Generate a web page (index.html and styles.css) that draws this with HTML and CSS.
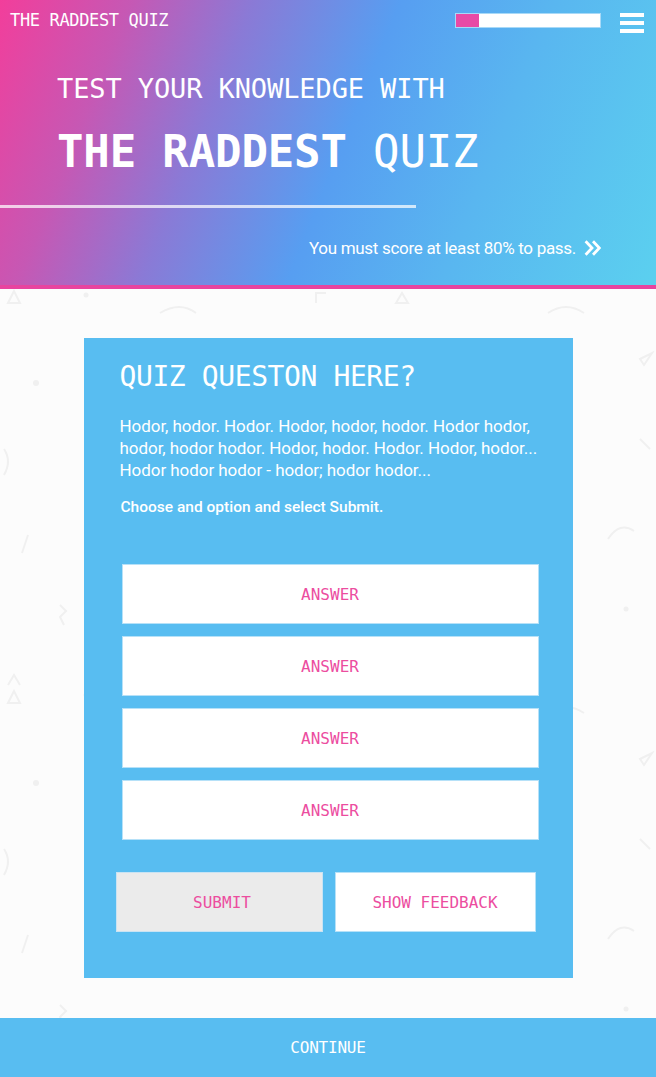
FILE: index.html
```html
<!DOCTYPE html>
<html lang="en">
<head>
<meta charset="utf-8">
<title>The Raddest Quiz</title>
<link rel="stylesheet" href="styles.css">
</head>
<body>
<header class="hero">
  <div class="topbar">
    <div class="brand">THE RADDEST QUIZ</div>
    <div class="top-right">
      <div class="progress"><div class="progress-fill" style="width:16%"></div></div>
      <div class="menu" aria-label="Menu"><span></span><span></span><span></span></div>
    </div>
  </div>
  <div class="hero-titles">
    <p class="kicker">TEST YOUR KNOWLEDGE WITH</p>
    <h1 class="title"><b>THE RADDEST</b> QUIZ</h1>
  </div>
  <div class="rule"></div>
  <p class="pass">You must score at least 80% to pass.
    <svg class="chev" width="17" height="16" viewBox="0 0 17 16"><path d="M1.6 1.2 L8 8 L1.6 14.8 M9 1.2 L15.4 8 L9 14.8" fill="none" stroke="#fff" stroke-width="2.8"/></svg>
  </p>
</header>
<main class="stage">
  <section class="card">
    <h2 class="question">QUIZ QUESTON HERE?</h2>
    <p class="body">Hodor, hodor. Hodor. Hodor, hodor, hodor. Hodor hodor, hodor, hodor hodor. Hodor, hodor. Hodor. Hodor, hodor... Hodor hodor hodor - hodor; hodor hodor...</p>
    <p class="instruct">Choose and option and select Submit.</p>
    <div class="answers">
      <button class="answer">ANSWER</button>
      <button class="answer">ANSWER</button>
      <button class="answer">ANSWER</button>
      <button class="answer">ANSWER</button>
    </div>
    <div class="actions">
      <button class="btn submit">SUBMIT</button>
      <button class="btn feedback">SHOW FEEDBACK</button>
    </div>
  </section>
</main>
<footer class="continue">CONTINUE</footer>
</body>
</html>
```
FILE: styles.css
```css
* { box-sizing: border-box; }
html, body { margin: 0; padding: 0; }
body {
  width: 656px;
  background: #fcfcfc;
  font-family: Roboto, "Liberation Sans", sans-serif;
  color: #fff;
}
.hero {
  height: 289px;
  padding: 10px 12px 0 0;
  background: linear-gradient(112deg, #f23e9b 0%, #c658b4 17%, #8a7ad6 33%, #579ef1 52%, #59b6f0 72%, #5bd0ef 100%);
  border-bottom: 4px solid #e8449f;
}
.topbar {
  display: flex;
  justify-content: space-between;
  align-items: flex-start;
  padding-left: 10px;
}
.brand {
  font-family: "DejaVu Sans Mono", "Liberation Mono", monospace;
  font-size: 17px;
  line-height: 20px;
  letter-spacing: -0.35px;
}
.top-right { display: flex; align-items: flex-start; gap: 19px; padding-top: 3px; }
.progress {
  width: 146px;
  height: 15px;
  background: #fff;
  border: 1px solid #a8d9f7;
}
.progress-fill { height: 100%; background: #e84aa6; }
.menu { display: flex; flex-direction: column; gap: 4px; width: 24px; }
.menu span { display: block; height: 4px; background: #fff; }
.hero-titles { padding-left: 57px; margin-top: 40px; }
.kicker {
  margin: 0;
  font-family: "DejaVu Sans Mono", "Liberation Mono", monospace;
  font-size: 27px;
  line-height: 32px;
  letter-spacing: -0.1px;
}
.title {
  margin: 21px 0 0;
  font-family: "DejaVu Sans Mono", "Liberation Mono", monospace;
  font-size: 44px;
  line-height: 52px;
  font-weight: normal;
  letter-spacing: -0.15px;
}
.title b { font-weight: bold; }
.rule {
  width: 416px;
  height: 3px;
  margin-top: 27px;
  background: rgba(255,255,255,0.72);
}
.pass {
  margin: 29px 43px 0 0;
  display: flex;
  justify-content: flex-end;
  align-items: center;
  gap: 8px;
  font-size: 17px;
  line-height: 22px;
  letter-spacing: -0.3px;
}
.chev { display: block; }
.stage {
  padding: 49px 0 40px;
  background-color: #fcfcfc;
  background-image: url("data:image/svg+xml;utf8,<svg xmlns='http://www.w3.org/2000/svg' width='656' height='400' viewBox='0 0 656 400'><g fill='none' stroke='%23f0f0f0' stroke-width='2'><path d='M8 14 L14 2 L20 14 Z'/><path d='M4 160 Q12 172 4 186'/><path d='M28 246 L22 264'/><path d='M60 316 L66 322 L60 328 L64 336'/><path d='M8 396 L14 386 L20 396'/><path d='M316 14 L316 4 L326 4'/><path d='M396 14 L402 4 L408 14 Z'/><path d='M548 24 Q566 12 584 24'/><path d='M640 70 L652 64 L644 76 Z'/><path d='M608 250 Q620 232 634 242'/><path d='M640 150 L650 160'/><path d='M160 24 Q180 12 196 24'/></g><g fill='%23f0f0f0'><circle cx='36' cy='94' r='3'/><circle cx='86' cy='6' r='2.5'/><circle cx='546' cy='96' r='2.5'/><circle cx='626' cy='320' r='2.5'/></g></svg>");
  background-repeat: repeat-y;
}
.card {
  width: 489px;
  margin: 0 auto;
  background: #58bdf1;
  padding: 22px 34px 46px 36px;
}
.question {
  margin: 0;
  font-family: "DejaVu Sans Mono", "Liberation Mono", monospace;
  font-size: 28px;
  line-height: 34px;
  font-weight: normal;
  letter-spacing: -0.4px;
}
.body {
  margin: 21px 0 0;
  width: 428px;
  font-size: 17px;
  line-height: 22px;
  letter-spacing: -0.05px;
}
.instruct {
  margin: 16px 0 0 1px;
  font-size: 15.5px;
  line-height: 20px;
  font-weight: 500;
}
.answers {
  margin-top: 47px;
  padding-left: 2px;
  display: flex;
  flex-direction: column;
  gap: 12px;
}
.answer, .btn {
  height: 60px;
  background: #fff;
  border: 1px solid #b6e1f8;
  color: #ec4d9f;
  font-family: "DejaVu Sans Mono", "Liberation Mono", monospace;
  font-size: 16px;
  padding: 0;
  display: flex;
  align-items: center;
  justify-content: center;
}
.answer { width: 417px; }
.actions {
  margin: 32px 0 0 -4px;
  display: flex;
  gap: 12px;
}
.submit { width: 207px; background: #ebebeb; border-color: #c9e3f3; padding-left: 6px; }
.feedback { width: 201px; }
.continue {
  height: 59px;
  background: #58bdf1;
  display: flex;
  align-items: center;
  justify-content: center;
  font-family: "DejaVu Sans Mono", "Liberation Mono", monospace;
  font-size: 16px;
  letter-spacing: -0.2px;
}
```
